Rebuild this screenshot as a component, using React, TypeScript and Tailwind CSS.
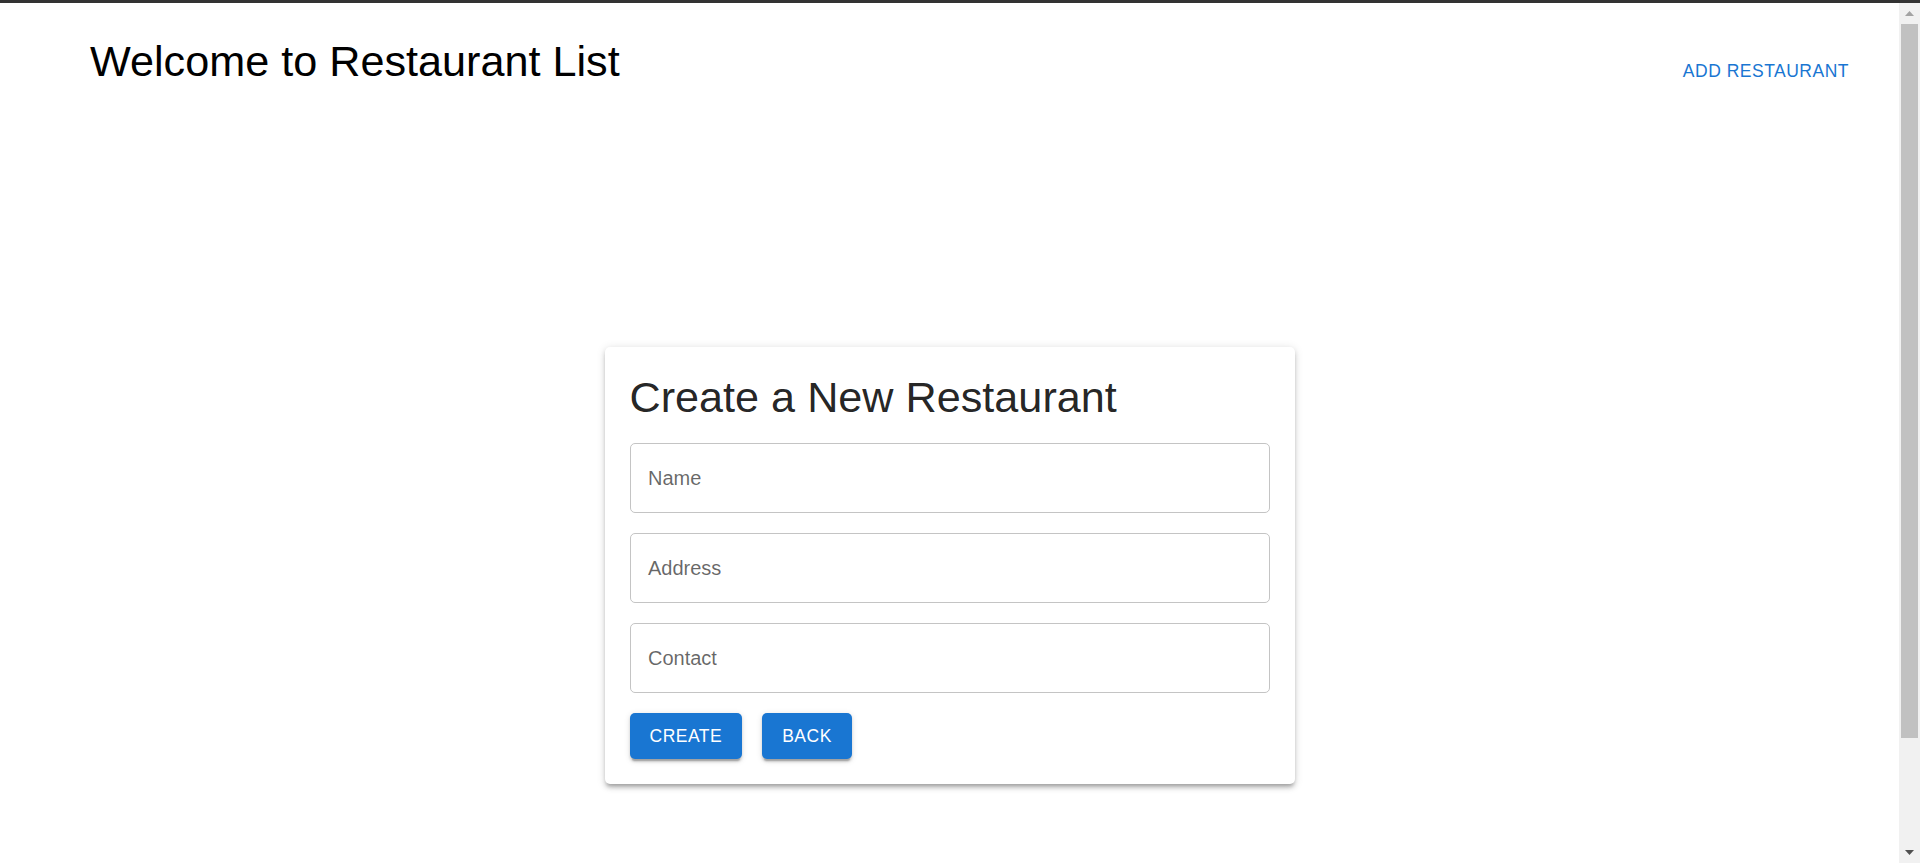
import React from "react";

const font = { fontFamily: '"Liberation Sans", Arial, sans-serif' };

function Field({ label }: { label: string }) {
  return (
    <div className="h-[70px] w-full rounded-[5px] border border-[#c4c4c4] px-[17.5px] flex items-center">
      <span className="text-[20px] leading-[23px] text-[rgba(0,0,0,0.6)]">{label}</span>
    </div>
  );
}

function Btn({ children }: { children: React.ReactNode }) {
  return (
    <button className="h-[46px] px-[20px] rounded-[5px] bg-[#1976d2] text-white text-[17.5px] leading-[30px] tracking-[0.5px] uppercase shadow-[0_3.75px_1.25px_-2.5px_rgba(0,0,0,0.2),0_2.5px_2.5px_0_rgba(0,0,0,0.14),0_1.25px_6.25px_0_rgba(0,0,0,0.12)]">
      {children}
    </button>
  );
}

export default function App() {
  return (
    <div className="h-[863px] w-[1920px] overflow-hidden bg-white flex flex-col" style={font}>
      <div className="h-[3px] bg-[#333333] shrink-0" />
      <div className="flex-1 flex flex-row min-h-0">
        <main className="flex-1 flex flex-col">
          <header className="flex flex-row justify-between items-start pl-[90px] pr-[40px] pt-[33px]">
            <h1 className="text-[43.2px] leading-[51px] text-black">Welcome to Restaurant List</h1>
            <button className="mt-[12px] h-[46px] px-[10px] text-[17.5px] leading-[30px] tracking-[0.5px] text-[#1976d2] uppercase">
              Add Restaurant
            </button>
          </header>
          <div className="flex justify-center mt-[253px]">
            <div className="w-[690px] p-[25px] rounded-[5px] bg-white flex flex-col gap-[20px] shadow-[0_3.75px_3.75px_-2.5px_rgba(0,0,0,0.2),0_3.75px_5px_0_rgba(0,0,0,0.14),0_1.25px_10px_0_rgba(0,0,0,0.12)]">
              <h2 className="text-[43.2px] leading-[51px] text-[rgba(0,0,0,0.87)]">Create a New Restaurant</h2>
              <Field label="Name" />
              <Field label="Address" />
              <Field label="Contact" />
              <div className="flex flex-row gap-[20px]">
                <Btn>Create</Btn>
                <Btn>Back</Btn>
              </div>
            </div>
          </div>
        </main>
        <div className="w-[21px] shrink-0 bg-[#f1f1f1] flex flex-col">
          <div className="h-[21px] flex items-center justify-center">
            <svg width="9" height="5" viewBox="0 0 9 5"><polygon points="0,5 9,5 4.5,0" fill="#a3a3a3" /></svg>
          </div>
          <div className="h-[714px] mx-[2px] bg-[#c1c1c1]" />
          <div className="flex-1" />
          <div className="h-[21px] flex items-center justify-center">
            <svg width="9" height="5" viewBox="0 0 9 5"><polygon points="0,0 9,0 4.5,5" fill="#505050" /></svg>
          </div>
        </div>
      </div>
    </div>
  );
}
